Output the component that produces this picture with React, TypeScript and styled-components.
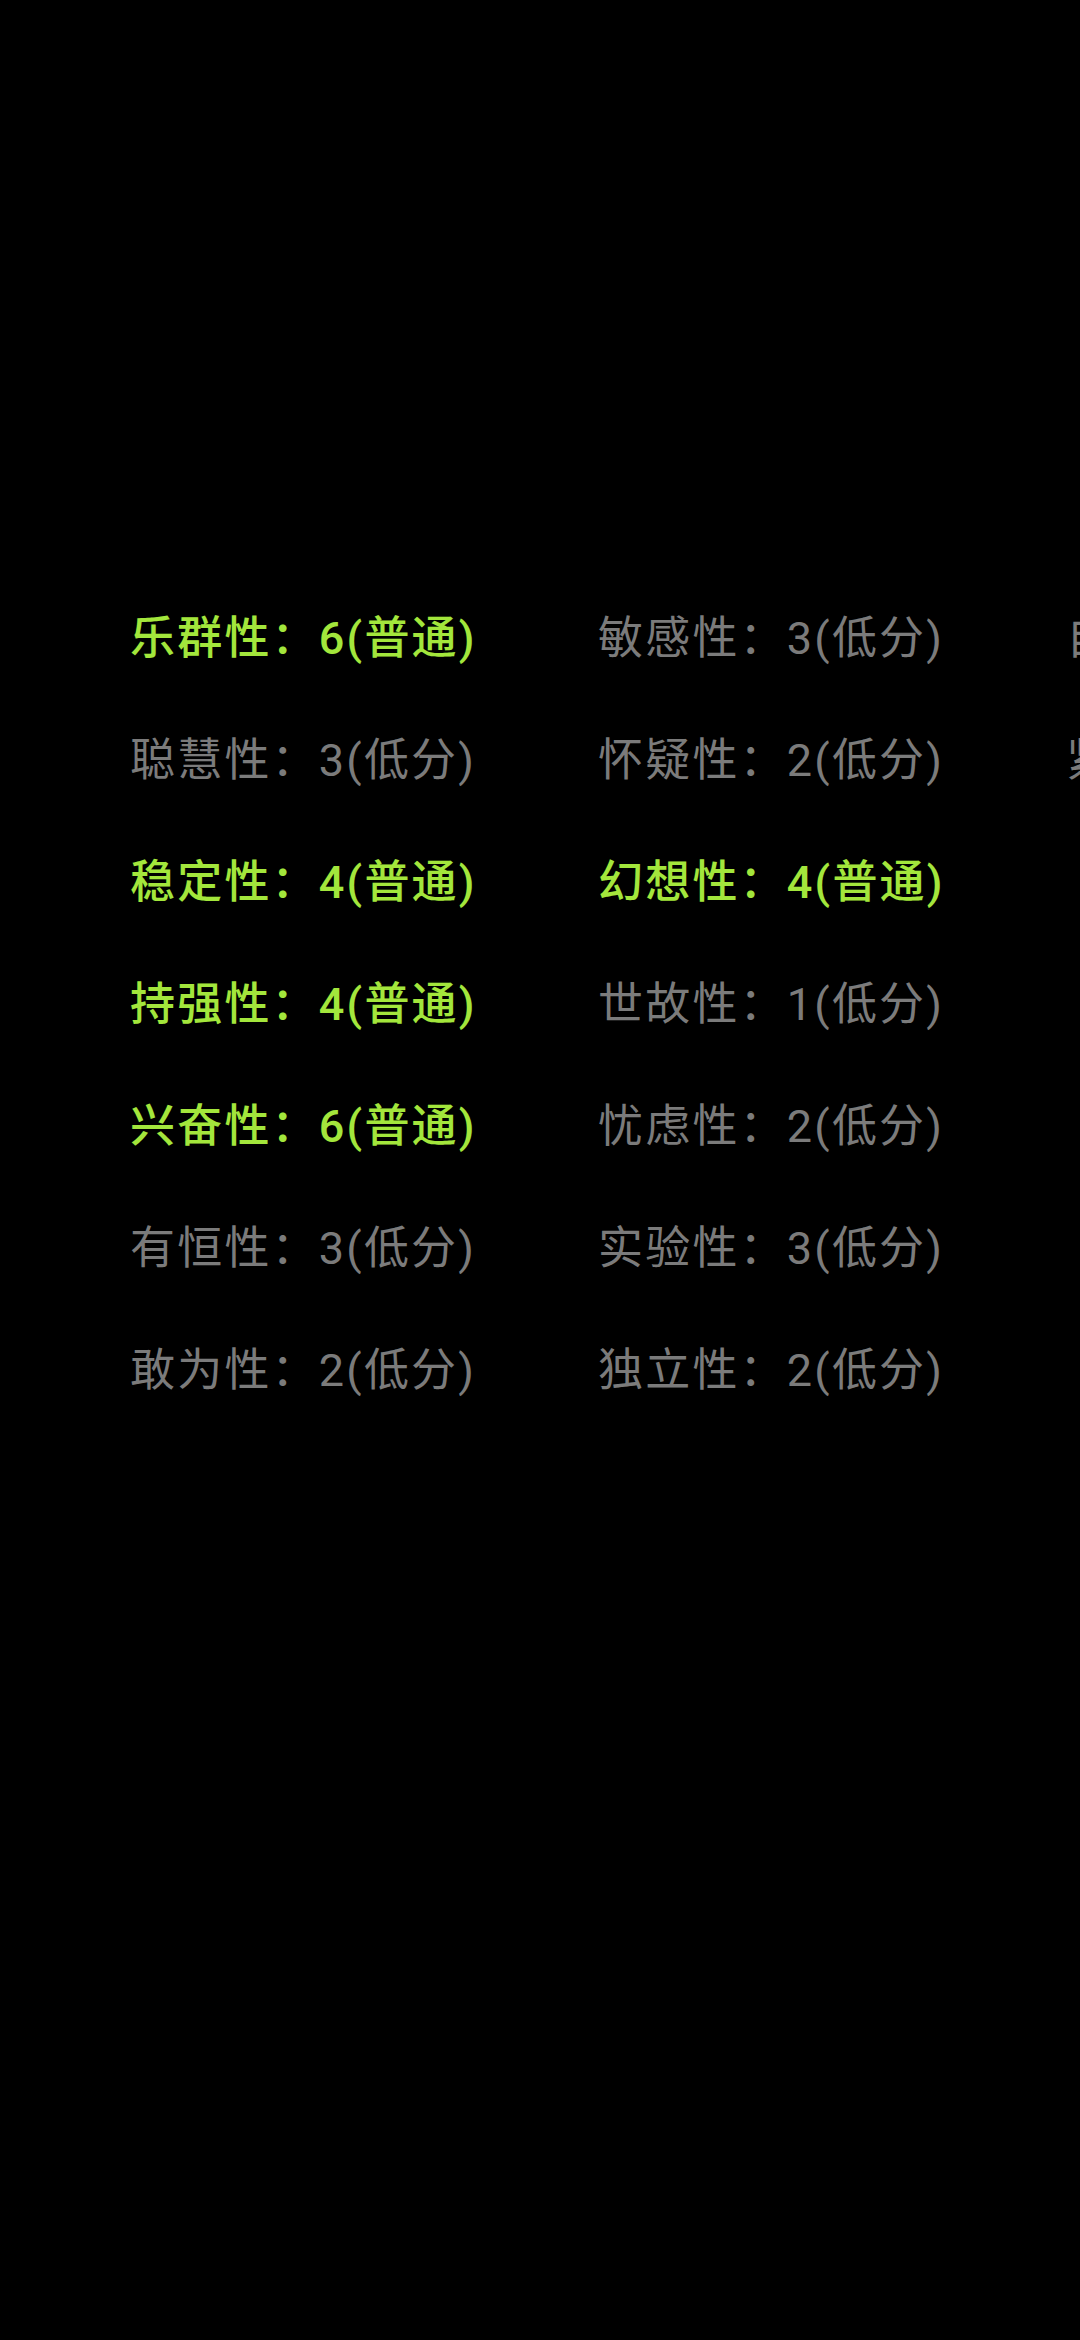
import React from 'react';
import styled, { createGlobalStyle } from 'styled-components';

const GlobalStyle = createGlobalStyle`
  html, body {
    margin: 0;
    padding: 0;
    background: #000;
  }
  body {
    font-family: Roboto, "Noto Sans CJK SC", "Noto Sans", sans-serif;
  }
`;

const Screen = styled.div`
  width: 1080px;
  height: 2340px;
  background: #000;
  overflow: hidden;
`;

const FactorGrid = styled.div`
  display: grid;
  grid-auto-flow: column;
  grid-template-rows: repeat(7, 122px);
  grid-auto-columns: 468px;
  padding: 573px 0 0 130px;
`;

const Factor = styled.div<{ $normal: boolean }>`
  display: flex;
  align-items: center;
  white-space: nowrap;
  font-size: 45px;
  letter-spacing: 2.2px;
  color: ${(p) => (p.$normal ? '#a3e63c' : '#7b7b7b')};
  font-weight: ${(p) => (p.$normal ? 500 : 400)};
`;

interface Item {
  name: string;
  score: number;
}

const factors: Item[] = [
  { name: '乐群性', score: 6 },
  { name: '聪慧性', score: 3 },
  { name: '稳定性', score: 4 },
  { name: '持强性', score: 4 },
  { name: '兴奋性', score: 6 },
  { name: '有恒性', score: 3 },
  { name: '敢为性', score: 2 },
  { name: '敏感性', score: 3 },
  { name: '怀疑性', score: 2 },
  { name: '幻想性', score: 4 },
  { name: '世故性', score: 1 },
  { name: '忧虑性', score: 2 },
  { name: '实验性', score: 3 },
  { name: '独立性', score: 2 },
  { name: '自律性', score: 3 },
  { name: '紧张性', score: 2 },
];

function level(score: number) {
  if (score <= 3) return '低分';
  if (score >= 8) return '高分';
  return '普通';
}

export default function App() {
  return (
    <Screen>
      <GlobalStyle />
      <FactorGrid>
        {factors.map((f) => (
          <Factor key={f.name} $normal={level(f.score) === '普通'}>
            {f.name}：{f.score}({level(f.score)})
          </Factor>
        ))}
      </FactorGrid>
    </Screen>
  );
}
